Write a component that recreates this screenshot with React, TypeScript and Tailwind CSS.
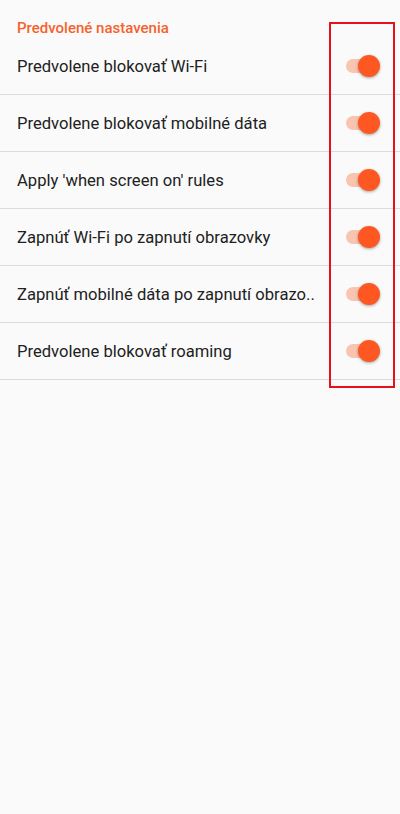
const rows = [
  "Predvolene blokovať Wi-Fi",
  "Predvolene blokovať mobilné dáta",
  "Apply 'when screen on' rules",
  "Zapnúť Wi-Fi po zapnutí obrazovky",
  "Zapnúť mobilné dáta po zapnutí obrazo..",
  "Predvolene blokovať roaming",
];

function Toggle() {
  return (
    <div className="relative h-[22px] w-[36px] shrink-0">
      <div className="absolute left-[2px] top-[4px] h-[14px] w-[32px] rounded-full bg-[#f9c4b0]" />
      <div className="absolute right-0 top-0 h-[22px] w-[22px] rounded-full bg-[#ff5722] shadow-[0_1px_3px_rgba(0,0,0,0.35)]" />
    </div>
  );
}

export default function App() {
  return (
    <div className="relative min-h-[814px] w-[400px] bg-[#fafafa] font-['Roboto',sans-serif]">
      <div className="h-[38px] px-[17px] pt-[19px] text-[15px] font-medium leading-[18px] text-[#f4622e]">
        Predvolené nastavenia
      </div>
      <ul>
        {rows.map((label) => (
          <li
            key={label}
            className="flex h-[57px] items-center justify-between border-b border-[#dcdcdc] pl-[17px] pr-[20px]"
          >
            <span className="pt-[3px] text-[16.6px] text-[#212121]">{label}</span>
            <Toggle />
          </li>
        ))}
      </ul>
      {/* highlight box */}
      <div className="pointer-events-none absolute left-[329px] top-[22px] h-[366px] w-[66px] border-2 border-[#e8101a]" />
    </div>
  );
}
